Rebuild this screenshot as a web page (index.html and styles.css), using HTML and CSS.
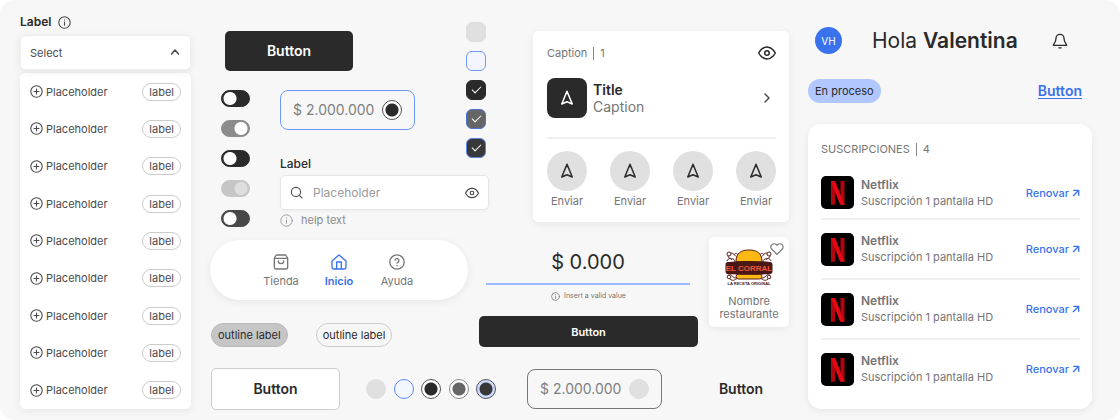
FILE: index.html
```html
<!DOCTYPE html>
<html lang="es">
<head>
<meta charset="utf-8">
<meta name="viewport" content="width=device-width, initial-scale=1">
<title>UI components</title>
<link rel="stylesheet" href="styles.css">
</head>
<body>
<svg class="sprite" aria-hidden="true">
  <symbol id="i-info" viewBox="0 0 24 24"><circle cx="12" cy="12" r="10.5"/><path d="M12 11v6M12 7v.6"/></symbol>
  <symbol id="i-plus" viewBox="0 0 24 24"><circle cx="12" cy="12" r="10.5"/><path d="M12 7.5v9M7.5 12h9"/></symbol>
  <symbol id="i-up" viewBox="0 0 24 24"><path d="M5 16l7-8 7 8"/></symbol>
  <symbol id="i-right" viewBox="0 0 24 24"><path d="M8 4l8 8-8 8"/></symbol>
  <symbol id="i-eye" viewBox="0 0 24 24"><path d="M1 12s3.8-8 11-8 11 8 11 8-3.8 8-11 8S1 12 1 12z"/><circle cx="12" cy="12" r="3"/></symbol>
  <symbol id="i-search" viewBox="0 0 24 24"><circle cx="11" cy="11" r="8.5"/><path d="M17.2 17.2L22 22"/></symbol>
  <symbol id="i-nav" viewBox="0 0 24 24"><path d="M12 3L5 20l7-3 7 3zM12 3v3"/></symbol>
  <symbol id="i-bag" viewBox="0 0 24 24"><path d="M5 1.500h14l3 4.500v14a2.500 2.500 0 0 1-2.500 2.500h-15A2.500 2.500 0 0 1 2 20V6zM2 6.500h20M16 10.500a4 4 0 0 1-8 0"/></symbol>
  <symbol id="i-home" viewBox="0 0 24 24"><path d="M1.500 10.500L12 1.500l10.500 9V20a2.500 2.500 0 0 1-2.500 2.500H4A2.500 2.500 0 0 1 1.500 20zM8.500 22.500V12h7v10.500"/></symbol>
  <symbol id="i-help" viewBox="0 0 24 24"><circle cx="12" cy="12" r="10.800"/><path d="M9 9.200a3 3 0 0 1 5.900 1c0 2-2.900 2.700-2.900 3.300M12 17v.500"/></symbol>
  <symbol id="i-heart" viewBox="0 0 24 24"><path d="M20.800 4.600a5.500 5.500 0 0 0-7.800 0L12 5.700l-1-1.100a5.500 5.500 0 0 0-7.800 7.800L12 21.200l8.800-8.800a5.500 5.500 0 0 0 0-7.800z"/></symbol>
  <symbol id="i-bell" viewBox="0 0 24 24"><path d="M18 8A6 6 0 0 0 6 8c0 7-4 8-4 10.500h20C22 16 18 15 18 8zM10.300 22.300h3.400"/></symbol>
  <symbol id="i-out" viewBox="0 0 24 24"><path d="M4 20L20 4M5 4h15v15"/></symbol>
  <symbol id="i-netflix" viewBox="0 0 33 33">
    <rect width="33" height="33" rx="5" fill="#000"/>
    <path d="M10 5h4v23.500l-4 .5z" fill="#b1060f"/>
    <path d="M19.500 5h4v24l-4-.5z" fill="#b1060f"/>
    <path d="M10 5h4.200l9.300 24-4.500-.6z" fill="#e50914"/>
  </symbol>
</svg>

<main class="board">
  <section class="picker">
    <label class="picker-label" for="picker">Label <svg class="icon icon-13"><use href="#i-info"/></svg></label>
    <div class="select-wrap">
      <select id="picker" class="select"><option>Select</option></select>
      <svg class="icon icon-12 select-arrow"><use href="#i-up"/></svg>
    </div>
    <ul class="options">
      <li><svg class="icon icon-13"><use href="#i-plus"/></svg>Placeholder<span class="chip">label</span></li>
      <li><svg class="icon icon-13"><use href="#i-plus"/></svg>Placeholder<span class="chip">label</span></li>
      <li><svg class="icon icon-13"><use href="#i-plus"/></svg>Placeholder<span class="chip">label</span></li>
      <li><svg class="icon icon-13"><use href="#i-plus"/></svg>Placeholder<span class="chip">label</span></li>
      <li><svg class="icon icon-13"><use href="#i-plus"/></svg>Placeholder<span class="chip">label</span></li>
      <li><svg class="icon icon-13"><use href="#i-plus"/></svg>Placeholder<span class="chip">label</span></li>
      <li><svg class="icon icon-13"><use href="#i-plus"/></svg>Placeholder<span class="chip">label</span></li>
      <li><svg class="icon icon-13"><use href="#i-plus"/></svg>Placeholder<span class="chip">label</span></li>
      <li><svg class="icon icon-13"><use href="#i-plus"/></svg>Placeholder<span class="chip">label</span></li>
    </ul>
  </section>

  <section class="middle">
    <div class="row-top">
      <div class="controls">
        <button class="btn btn-dark" type="button">Button</button>
        <div class="toggles">
          <input class="toggle" type="checkbox" role="switch" aria-label="Switch off">
          <input class="toggle toggle-gray" type="checkbox" role="switch" aria-label="Switch on" checked>
          <input class="toggle" type="checkbox" role="switch" aria-label="Switch hover">
          <input class="toggle toggle-disabled" type="checkbox" role="switch" aria-label="Switch disabled" checked disabled>
          <input class="toggle toggle-soft" type="checkbox" role="switch" aria-label="Switch pressed">
        </div>
        <label class="amount amount-active"><span>$ 2.000.000</span><input class="radio radio-dark" type="radio" name="amount-a" checked></label>
        <div class="checks">
          <input class="check check-disabled" type="checkbox" aria-label="Disabled" disabled>
          <input class="check check-focus" type="checkbox" aria-label="Focused">
          <input class="check" type="checkbox" aria-label="Checked" checked>
          <input class="check check-gray" type="checkbox" aria-label="Checked gray" checked>
          <input class="check check-ring" type="checkbox" aria-label="Checked focused" checked>
        </div>
        <div class="field">
          <label class="field-label" for="search">Label</label>
          <div class="field-box">
            <svg class="icon icon-13"><use href="#i-search"/></svg>
            <input id="search" type="text" placeholder="Placeholder">
            <svg class="icon icon-14"><use href="#i-eye"/></svg>
          </div>
          <p class="help"><svg class="icon icon-13 thin"><use href="#i-info"/></svg>help text</p>
        </div>
      </div>

      <article class="card">
        <header class="card-head"><span>Caption</span><span class="bar"></span><span>1</span><svg class="icon icon-18"><use href="#i-eye"/></svg></header>
        <div class="card-main">
          <span class="tile"><svg class="icon icon-18"><use href="#i-nav"/></svg></span>
          <div class="card-text"><strong>Title</strong><span>Caption</span></div>
          <svg class="icon icon-12"><use href="#i-right"/></svg>
        </div>
        <div class="actions">
          <button class="action" type="button"><span class="disc"><svg class="icon icon-18"><use href="#i-nav"/></svg></span>Enviar</button>
          <button class="action" type="button"><span class="disc"><svg class="icon icon-18"><use href="#i-nav"/></svg></span>Enviar</button>
          <button class="action" type="button"><span class="disc"><svg class="icon icon-18"><use href="#i-nav"/></svg></span>Enviar</button>
          <button class="action" type="button"><span class="disc"><svg class="icon icon-18"><use href="#i-nav"/></svg></span>Enviar</button>
        </div>
      </article>
    </div>

    <div class="row-mid">
      <div class="nav-col">
        <nav class="nav">
          <a href="#tienda"><svg class="icon icon-16"><use href="#i-bag"/></svg>Tienda</a>
          <a href="#inicio" class="current"><svg class="icon icon-16"><use href="#i-home"/></svg>Inicio</a>
          <a href="#ayuda"><svg class="icon icon-16"><use href="#i-help"/></svg>Ayuda</a>
        </nav>
        <div class="tags"><span class="tag tag-gray">outline label</span><span class="tag tag-line">outline label</span></div>
      </div>
      <div class="value-col">
        <input class="value" type="text" value="$ 0.000" aria-label="Value">
        <p class="value-help"><svg class="icon icon-9"><use href="#i-info"/></svg>Insert a valid value</p>
        <button class="btn btn-wide" type="button">Button</button>
      </div>
      <article class="shop">
        <svg class="icon icon-14 shop-heart"><use href="#i-heart"/></svg>
        <svg class="shop-logo" viewBox="0 0 48 38" role="img" aria-label="El Corral">
          <g fill="none" stroke="#5a201c" stroke-width="1">
            <circle cx="4" cy="6" r="2"/><circle cx="44" cy="6" r="2"/>
            <path d="M6 5c4 0 4 5 8 4M42 5c-4 0-4 5-8 4M3 8c0 4 7 1 7 6M45 8c0 4-7 1-7 6"/>
            <path d="M9 7c2-4 6 0 3 3M39 7c-2-4-6 0-3 3M2 13c1-3 4-3 5-1M46 13c-1-3-4-3-5-1"/>
            <circle cx="4" cy="29" r="1.800"/><circle cx="44" cy="29" r="1.800"/>
            <path d="M3 26c4-1 4 5 9 4M45 26c-4-1-4 5-9 4M5 31c3 3 6 0 8-1M43 31c-3 3-6 0-8-1"/>
          </g>
          <path d="M11 14C11 5 16 2 24 2s13 3 13 12z" fill="#fdb913" stroke="#5a201c"/>
          <rect x="11" y="26" width="26" height="5" rx="2.500" fill="#fdb913" stroke="#5a201c"/>
          <path d="M3 14c12-1.500 30-1.500 42 0q2.500 0 2.500 3v6q0 3-2.500 3c-12 1-30 1-42 0q-2.500 0-2.500-3v-6q0-3 2.500-3z" fill="#4a1715"/>
          <text x="24" y="23" class="logo-name">EL CORRAL</text>
          <text x="24" y="37" class="logo-sub">LA RECETA ORIGINAL</text>
        </svg>
        <p>Nombre restaurante</p>
      </article>
    </div>

    <div class="row-low">
      <button class="btn btn-line" type="button">Button</button>
      <div class="radios">
        <input class="radio radio-disabled" type="radio" name="r1" aria-label="Disabled" disabled>
        <input class="radio radio-focus" type="radio" name="r2" aria-label="Focused">
        <input class="radio radio-dark" type="radio" name="r3" aria-label="Selected" checked>
        <input class="radio radio-gray" type="radio" name="r4" aria-label="Selected gray" checked>
        <input class="radio radio-ring" type="radio" name="r5" aria-label="Selected focused" checked>
      </div>
      <label class="amount"><span>$ 2.000.000</span><input class="radio radio-disabled" type="radio" name="amount-b"></label>
      <button class="btn btn-text" type="button">Button</button>
    </div>
  </section>

  <section class="account">
    <header class="hello">
      <span class="avatar">VH</span>
      <h1>Hola <b>Valentina</b></h1>
      <svg class="icon icon-16"><use href="#i-bell"/></svg>
    </header>
    <div class="status"><span class="tag tag-blue">En proceso</span><a class="link" href="#estado">Button</a></div>
    <div class="subs">
      <h2>SUSCRIPCIONES<span class="bar"></span>4</h2>
      <ul>
        <li><svg class="brand"><use href="#i-netflix"/></svg><div><strong>Netflix</strong><span>Suscripción 1 pantalla HD</span></div><a href="#renovar">Renovar<svg class="icon icon-8"><use href="#i-out"/></svg></a></li>
        <li><svg class="brand"><use href="#i-netflix"/></svg><div><strong>Netflix</strong><span>Suscripción 1 pantalla HD</span></div><a href="#renovar">Renovar<svg class="icon icon-8"><use href="#i-out"/></svg></a></li>
        <li><svg class="brand"><use href="#i-netflix"/></svg><div><strong>Netflix</strong><span>Suscripción 1 pantalla HD</span></div><a href="#renovar">Renovar<svg class="icon icon-8"><use href="#i-out"/></svg></a></li>
        <li><svg class="brand"><use href="#i-netflix"/></svg><div><strong>Netflix</strong><span>Suscripción 1 pantalla HD</span></div><a href="#renovar">Renovar<svg class="icon icon-8"><use href="#i-out"/></svg></a></li>
      </ul>
    </div>
  </section>
</main>
</body>
</html>
```
FILE: styles.css
```css
:root {
  --ink: #2a2a2a;
  --text: #4a4a4a;
  --muted: #757575;
  --blue: #3a72ee;
  --shadow: 0 2px 8px rgba(0, 0, 0, .07);
}
* { box-sizing: border-box; }
body { margin: 0; background: #fff; color: var(--text); font: 11px/14px Inter, "Liberation Sans", sans-serif; }
ul, p, h1, h2 { margin: 0; padding: 0; list-style: none; font-weight: 400; }
button, input, select { margin: 0; font: inherit; color: inherit; }
a { color: inherit; text-decoration: none; }
.sprite { display: none; }
.icon { flex: none; fill: none; stroke: currentColor; stroke-width: 2; stroke-linecap: round; stroke-linejoin: round; }
.icon-8 { width: 8px; height: 8px; stroke-width: 4; }
.icon-9 { width: 9px; height: 9px; }
.icon-12 { width: 12px; height: 12px; stroke-width: 3; }
.icon-13 { width: 13px; height: 13px; }
.icon-14 { width: 14px; height: 14px; }
.icon-16 { width: 16px; height: 16px; }
.icon-18 { width: 18px; height: 18px; }
.thin { stroke-width: 1.5; }

.board {
  display: grid;
  grid-template-columns: minmax(0, 171fr) minmax(0, 580fr) minmax(0, 285fr);
  gap: 18px;
  min-height: 100vh;
  padding: 0 28px 0 20px;
  background: #f7f7f7;
  border-radius: 14px;
}

/* Select with its open list */
.picker { display: flex; flex-direction: column; padding: 15px 0 11px; }
.picker-label { display: flex; align-items: center; gap: 7px; margin-bottom: 6px; font-size: 12px; font-weight: 600; color: var(--ink); }
.picker-label .icon { color: var(--text); }
.select-wrap { position: relative; margin-bottom: 3px; }
.select { appearance: none; display: block; width: 100%; height: 35px; padding: 0 9px; border: 1px solid #eee; border-radius: 5px; background: #fff; box-shadow: var(--shadow); }
.select-arrow { position: absolute; right: 10px; top: 11px; pointer-events: none; }
.options { display: flex; flex: 1; flex-direction: column; border-radius: 5px; background: #fff; box-shadow: var(--shadow); }
.options li { display: flex; flex: 1; align-items: center; gap: 3px; padding: 0 10px; }
.chip { margin-left: auto; padding: 1px 6px; border: 1px solid #ccc; border-radius: 9px; }

/* Middle column */
.middle { display: flex; flex-direction: column; padding-top: 22px; }
.row-top { display: grid; grid-template-columns: minmax(0, 268fr) minmax(0, 256fr); gap: 44px; align-items: start; padding-left: 12px; }
.controls { display: grid; grid-template-columns: 59px 1fr 23px; grid-template-rows: 68px 67px auto; }
.btn { border: 0; border-radius: 5px; font-size: 14px; font-weight: 600; text-align: center; cursor: pointer; }
.btn-dark { grid-area: 1 / 1 / 2 / 3; width: 128px; height: 40px; margin: 9px 0 0 4px; background: var(--ink); color: #fff; }
.toggles { grid-area: 2 / 1 / 4 / 2; display: flex; flex-direction: column; gap: 13px; }
.toggle { appearance: none; width: 29px; height: 17px; border: 1px solid var(--ink); border-radius: 9px; background: radial-gradient(circle at 8px 50%, #fff 6px, transparent 7px) var(--ink); }
.toggle-gray { border-color: #8c8c8c; background: radial-gradient(circle at 19px 50%, #fff 6px, transparent 7px) #8c8c8c; }
.toggle-disabled { border-color: #c6c6c6; background: radial-gradient(circle at 19px 50%, #dedede 6px, transparent 7px) #c6c6c6; }
.toggle-soft { border-color: #484848; background: radial-gradient(circle at 8px 50%, #fff 6px, transparent 7px) #484848; }
.amount { display: flex; align-items: center; justify-content: space-between; width: 135px; height: 40px; padding: 0 12px; border: 1px solid #777; border-radius: 8px; font-size: 14px; color: #808080; }
.amount-active { grid-area: 2 / 2 / 3 / 3; border-color: #6f99f7; }
.checks { grid-area: 1 / 3 / 3 / 4; display: flex; flex-direction: column; gap: 9px; }
.check { appearance: none; flex: none; width: 20px; height: 20px; border: 1px solid var(--ink); border-radius: 6px; background: var(--ink); }
.check:checked::before { content: ""; display: block; width: 8px; height: 4px; margin: 5px auto 0; border: solid #fff; border-width: 0 0 1px 1px; transform: rotate(-45deg); }
.check-disabled { border-color: #e0e0e0; background: #e0e0e0; }
.check-focus { border-color: #6f99f7; background: #f4f6ff; }
.check-gray { border-color: #4a74d4; background: #666; }
.check-ring { border-color: #5b82dd; background: #383838; }
.radio { appearance: none; flex: none; width: 20px; height: 20px; border: 1px solid #555; border-radius: 50%; background: #fff; }
.radio-dark { background: radial-gradient(circle, var(--ink) 6px, #fff 7px); }
.radio-gray { border-color: #888; background: radial-gradient(circle, #666 6px, #fff 7px); }
.radio-ring { background: radial-gradient(circle, #383838 6px, #ccdbff 7px); }
.radio-disabled { border-color: #e0e0e0; background: #e0e0e0; }
.radio-focus { border-color: #5c8af5; background: #f4f6ff; }
.field { grid-area: 3 / 2 / 4 / 4; }
.field-label { display: block; margin-bottom: 4px; font-size: 12px; font-weight: 500; color: var(--ink); }
.field-box { display: flex; align-items: center; gap: 10px; height: 35px; padding: 0 9px; border: 1px solid #e6e6e6; border-radius: 5px; background: #fff; box-shadow: 0 1px 3px rgba(0, 0, 0, .04); }
.field-box input { flex: 1; min-width: 0; padding: 0; border: 0; outline: 0; background: none; font-size: 12px; }
.field-box input::placeholder { color: #9a9a9a; opacity: 1; }
.help { display: flex; align-items: center; gap: 8px; padding-top: 3px; color: #8c8c8c; }

.card { margin-top: 9px; padding: 13px 13px 14px 14px; border-radius: 5px; background: #fff; box-shadow: var(--shadow); }
.card-head { display: flex; align-items: center; height: 18px; color: var(--muted); }
.card-head .icon { margin-left: auto; color: var(--ink); }
.bar { width: 1px; height: 13px; margin: 0 6px; background: #888; }
.card-main { display: flex; align-items: center; gap: 6px; padding: 16px 3px 19px 0; border-bottom: 2px solid #efefef; }
.tile, .disc { display: grid; place-items: center; width: 40px; height: 40px; }
.tile { border-radius: 8px; background: var(--ink); color: #fff; }
.card-text { display: grid; flex: 1; font-size: 14px; line-height: 17px; color: var(--muted); }
.card-text strong { font-weight: 600; color: var(--ink); }
.actions { display: flex; justify-content: space-between; padding-top: 12px; }
.action { display: grid; gap: 3px; justify-items: center; width: 40px; padding: 0; border: 0; background: none; color: var(--muted); }
.disc { border-radius: 50%; background: #e0e0e0; color: var(--ink); }

.row-mid { display: grid; grid-template-columns: minmax(0, 258fr) minmax(0, 219fr) minmax(0, 80fr); gap: 11px; margin-top: 10px; padding-left: 1px; }
.nav { display: flex; justify-content: center; height: 60px; margin: 3px 0 23px; padding-top: 14px; border-radius: 30px; background: #fff; box-shadow: var(--shadow); }
.nav a { display: flex; flex-direction: column; align-items: center; gap: 4px; width: 58px; color: var(--muted); }
.nav .current { color: var(--blue); font-weight: 600; }
.tags { display: flex; gap: 28px; padding-left: 1px; }
.tag { padding: 4px 6px; border: 1px solid transparent; border-radius: 12px; color: var(--ink); white-space: nowrap; }
.tag-gray { border-color: #bbb; background: #c6c6c6; }
.tag-line { border-color: #ccc; }
.tag-blue { background: #b0c8ff; }
.value-col { display: flex; flex-direction: column; }
.value { height: 48px; margin: 0 8px 0 7px; padding: 4px 0 0; border: 0 solid #9dbafa; border-bottom-width: 2px; outline: 0; background: none; font-size: 20px; text-align: center; color: var(--ink); min-width: 0; }
.value-help { display: flex; align-items: center; justify-content: center; gap: 4px; padding-top: 4px; font-size: 7px; color: var(--muted); }
.btn-wide { height: 31px; margin-top: auto; background: var(--ink); color: #fff; font-size: 11px; }
.shop { position: relative; align-self: start; padding: 11px 8px 6px; border-radius: 5px; background: #fff; box-shadow: var(--shadow); text-align: center; line-height: 13px; color: var(--muted); }
.shop-logo { display: block; width: 48px; height: 38px; margin: 0 auto 9px; }
.shop-heart { position: absolute; top: 5px; right: 5px; }
.logo-name { font: 700 8px "Liberation Sans Narrow", "Liberation Sans", sans-serif; fill: #f0563a; text-anchor: middle; }
.logo-sub { font: 700 4px "Liberation Sans Narrow", "Liberation Sans", sans-serif; fill: #4a1715; text-anchor: middle; }

.row-low { display: grid; grid-template-columns: minmax(0, 155fr) minmax(0, 161fr) minmax(0, 166fr) minmax(0, 96fr); align-items: center; margin-top: 21px; padding-left: 2px; }
.btn-line { width: 129px; height: 42px; border: 1px solid #ccc; background: #fff; color: var(--ink); }
.radios { display: flex; justify-content: space-between; width: 130px; }
.btn-text { padding: 0; background: none; color: var(--ink); }

/* Account column */
.account { display: flex; flex-direction: column; padding: 26px 0 11px 1px; }
.hello { display: flex; align-items: center; height: 29px; padding: 0 24px 0 7px; color: var(--ink); }
.hello .icon { margin-left: auto; }
.hello h1 { margin-left: 30px; font-size: 21px; line-height: 29px; white-space: nowrap; }
.hello b { font-weight: 600; }
.avatar { display: grid; place-items: center; width: 27px; height: 27px; border-radius: 50%; background: var(--blue); color: #fff; font-size: 10px; }
.status { display: flex; align-items: center; justify-content: space-between; margin: 24px 0 21px; padding-right: 10px; }
.link { border-bottom: 1px solid var(--blue); color: var(--blue); font-size: 14px; font-weight: 600; }
.subs { display: flex; flex: 1; flex-direction: column; padding: 14px 12px 8px 13px; border-radius: 13px; background: #fff; box-shadow: var(--shadow); }
.subs h2 { display: flex; align-items: center; height: 22px; margin-bottom: 7px; font-size: 11px; color: var(--muted); }
.subs li { display: flex; align-items: center; gap: 7px; height: 60px; border-bottom: 2px solid #efefef; }
.subs li:first-child { height: 53px; }
.subs li:last-child { border-bottom-color: transparent; }
.subs div { display: grid; flex: 1; line-height: 16px; color: var(--muted); }
.subs strong { font-size: 12px; font-weight: 600; }
.subs a { display: flex; align-items: center; gap: 3px; color: var(--blue); font-weight: 500; }
.brand { width: 33px; height: 33px; }
```
